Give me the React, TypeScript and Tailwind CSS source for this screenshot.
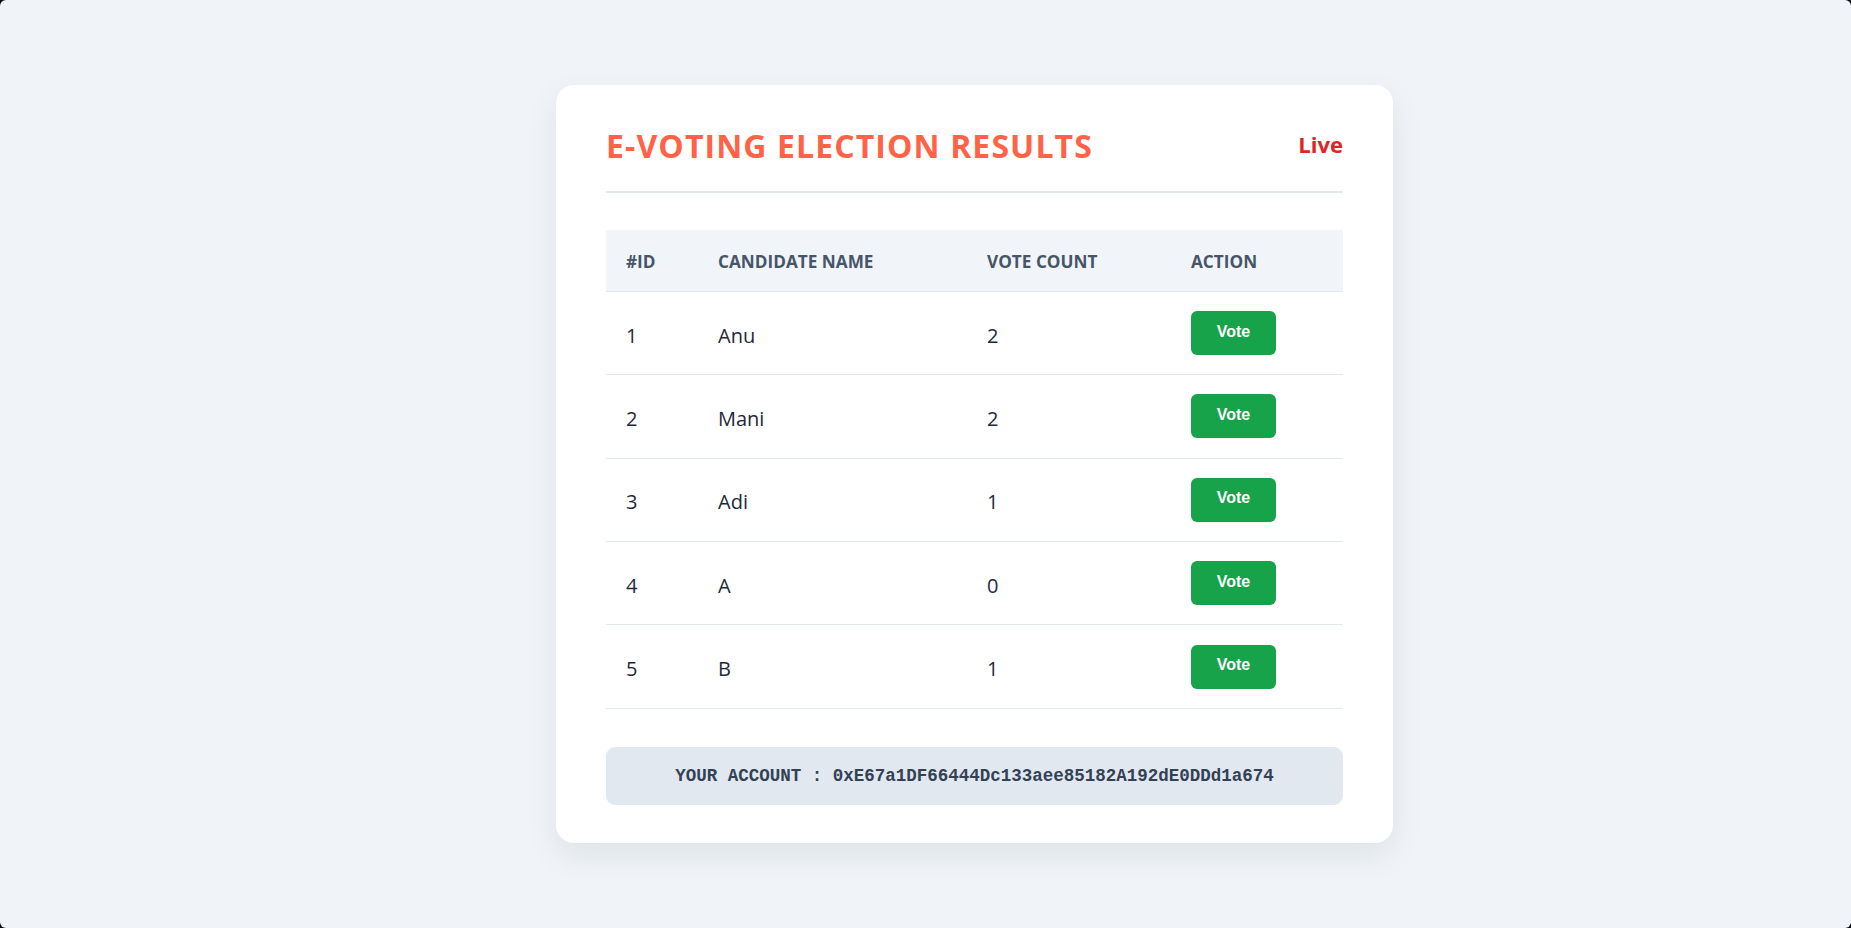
const candidates = [
  { id: 1, name: "Anu", votes: 2 },
  { id: 2, name: "Mani", votes: 2 },
  { id: 3, name: "Adi", votes: 1 },
  { id: 4, name: "A", votes: 0 },
  { id: 5, name: "B", votes: 1 },
];

export default function App() {
  return (
    <div className="h-[928px] w-full bg-[#0b0b1a]">
      <div className="flex h-full w-full justify-center rounded-[6px] bg-[#f0f4f8] pl-[98px] pt-[85px] font-['Open_Sans',sans-serif]">

        {/* Card */}

        <div className="h-fit w-[837px] rounded-[18px] bg-white px-[50px] pb-[38px] pt-[40px] shadow-[0_12px_32px_rgba(15,23,42,0.08)]">

          <div className="flex items-center justify-between border-b-2 border-[#e2e8f0] pb-[26px]">
            <h1 className="pt-[2px] text-[32px] leading-[1.2] font-bold tracking-[1.1px] text-[#ff6347]">
              E-VOTING ELECTION RESULTS
            </h1>
            <span className="pb-[2px] text-[22px] leading-[1.2] font-bold text-[#dc2626]">
              Live
            </span>
          </div>

          <table className="mt-[37px] w-full table-fixed border-collapse">
            <thead>
              <tr className="h-[61px] border-b border-[#e2e8f0] bg-[#f1f5f9] text-left text-[17.2px] font-bold text-[#475569]">
                <th className="w-[92px] pl-[20px] pt-[2px] font-bold">#ID</th>
                <th className="w-[269px] pl-[20px] pt-[2px] font-bold">CANDIDATE NAME</th>
                <th className="w-[204px] pl-[20px] pt-[2px] font-bold">VOTE COUNT</th>
                <th className="pl-[20px] pt-[2px] font-bold">ACTION</th>
              </tr>
            </thead>
            <tbody>
              {candidates.map((c) => (
                <tr
                  key={c.id}
                  className="h-[83.4px] border-b border-[#e2e8f0] text-[20px] text-[#1e293b]"
                >
                  <td className="pl-[20px] pt-[5px]">{c.id}</td>
                  <td className="pl-[20px] pt-[5px]">{c.name}</td>
                  <td className="pl-[20px] pt-[5px]">{c.votes}</td>
                  <td className="pl-[20px]">
                    <button className="h-[44px] w-[85px] rounded-[6px] bg-[#16a34a] pb-[3px] font-['Liberation_Sans',Arial,sans-serif] text-[16px] font-bold text-white">
                      Vote
                    </button>
                  </td>
                </tr>
              ))}
            </tbody>
          </table>

          <div className="mt-[38px] flex h-[58px] items-center justify-center rounded-[9px] bg-[#e2e8f0] font-['Liberation_Mono',monospace] text-[17.5px] font-bold text-[#334155]">
            YOUR ACCOUNT : 0xE67a1DF66444Dc133aee85182A192dE0DDd1a674
          </div>

        </div>

      </div>
    </div>
  );
}
